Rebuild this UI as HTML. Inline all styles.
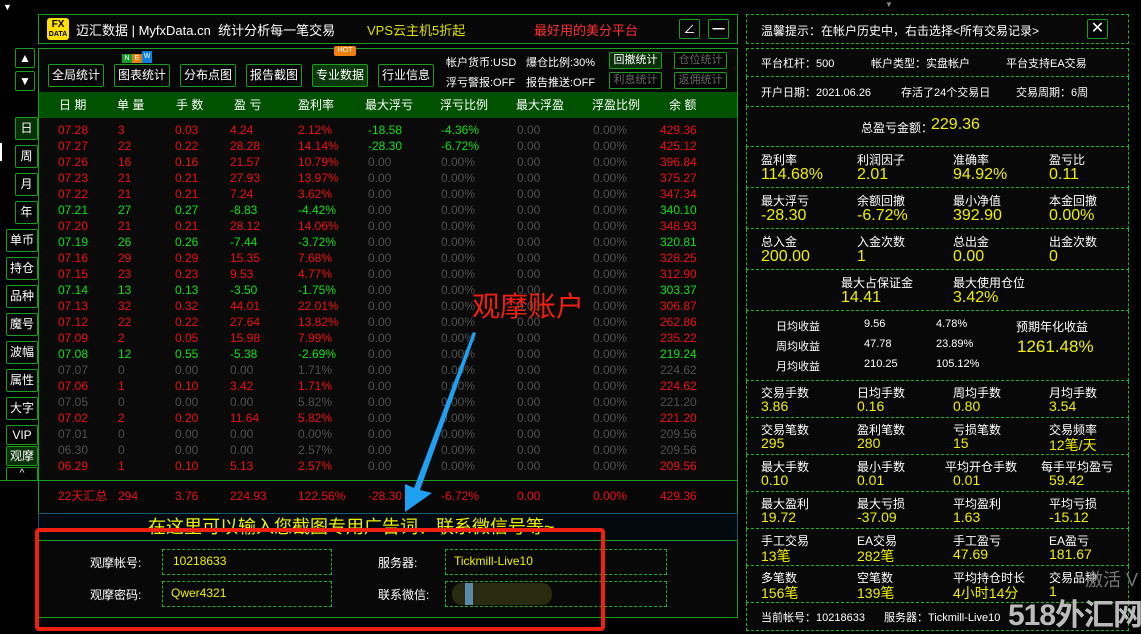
<!DOCTYPE html><html><head><meta charset="utf-8"><style>
*{margin:0;padding:0;box-sizing:border-box}
body{width:1141px;height:633px;background:#000;position:relative;overflow:hidden;font-family:"Liberation Sans","Noto Sans CJK SC",sans-serif;color:#fff;font-size:12px}
.a{position:absolute;white-space:nowrap}
.btn{position:absolute;border:1px solid #1c9e1c;background:#050505;color:#fff;text-align:center;font-size:12px;border-radius:2px}
.row{position:absolute;left:38px;width:700px;height:16px;font-size:12px;line-height:16px}
.row span{position:absolute}
.r{color:#f01010}.g{color:#10e010}.z{color:#505050}
.c1{left:20px}.c2{left:80px}.c3{left:137px}.c4{left:192px}.c5{left:260px}.c6{left:330px}.c7{left:403px}.c8{left:479px}.c9{left:555px}.c10{left:622px}
.sec{position:absolute;left:746px;width:383px;border-left:1px dashed #1cb41c;border-right:1px dashed #1cb41c;border-bottom:1px dashed #1cb41c;background:#080808}
.q{position:absolute;font-size:12px;color:#fff}
.v{position:absolute;font-size:16px;color:#f0f000}
</style></head><body>
<div class="a" style="left:3px;top:2px;color:#fff;font-size:9px">▼</div>
<!-- header -->
<div class="a" style="left:38px;top:14px;width:700px;height:30px;border:1px solid #1c9e1c;background:#070707"></div>
<div class="a" style="left:47px;top:18px;width:22px;height:22px;background:#ffe000;border-radius:3px;color:#000;font-weight:bold;font-size:10px;line-height:9px;text-align:center;padding-top:2px">FX<br><span style="font-size:7px">DATA</span></div>
<div class="a" style="left:76px;top:20px;font-size:13px">迈汇数据 | MyfxData.cn &nbsp;统计分析每一笔交易</div>
<div class="a" style="left:367px;top:20px;font-size:13px;color:#e0e000">VPS云主机5折起</div>
<div class="a" style="left:534px;top:20px;font-size:13px;color:#ff3030">最好用的美分平台</div>
<div class="btn" style="left:679px;top:19px;width:21px;height:20px;line-height:18px">∠</div>
<div class="btn" style="left:708px;top:19px;width:21px;height:20px;line-height:18px;font-weight:bold">━</div>
<!-- toolbar -->
<div class="a" style="left:38px;top:48px;width:700px;height:44px;border:1px solid #1c9e1c;border-bottom:none;background:#070707"></div>
<div class="btn" style="left:15px;top:48px;width:20px;height:20px;line-height:18px">▲</div>
<div class="btn" style="left:15px;top:71px;width:20px;height:20px;line-height:18px">▼</div>
<div class="btn" style="left:48px;top:64px;width:56px;height:23px;line-height:21px">全局统计</div>
<div class="btn" style="left:114px;top:64px;width:56px;height:23px;line-height:21px">图表统计</div>
<div class="a" style="left:122px;top:54px;width:10px;height:9px;background:#189a30;font-size:7px;text-align:center;line-height:9px">N</div>
<div class="a" style="left:132px;top:54px;width:10px;height:9px;background:#e08010;font-size:7px;text-align:center;line-height:9px">E</div>
<div class="a" style="left:142px;top:51px;width:10px;height:12px;background:#1080e0;font-size:7px;text-align:center;line-height:12px">W</div>
<div class="btn" style="left:180px;top:64px;width:56px;height:23px;line-height:21px">分布点图</div>
<div class="btn" style="left:246px;top:64px;width:56px;height:23px;line-height:21px">报告截图</div>
<div class="btn" style="left:312px;top:64px;width:56px;height:23px;line-height:21px;background:#0a3a0a">专业数据</div>
<div class="a" style="left:334px;top:46px;width:22px;height:10px;background:#f08010;font-size:7px;text-align:center;line-height:10px;border-radius:2px">HOT</div>
<div class="btn" style="left:378px;top:64px;width:56px;height:23px;line-height:21px">行业信息</div>
<div class="a" style="left:446px;top:54px;font-size:11px">帐户货币:USD</div>
<div class="a" style="left:526px;top:54px;font-size:11px">爆仓比例:30%</div>
<div class="a" style="left:446px;top:74px;font-size:11px">浮亏警报:OFF</div>
<div class="a" style="left:526px;top:74px;font-size:11px">报告推送:OFF</div>
<div class="btn" style="left:609px;top:52px;width:53px;height:17px;line-height:15px;font-size:11px;background:#0a300a">回撤统计</div>
<div class="btn" style="left:674px;top:52px;width:53px;height:17px;line-height:15px;font-size:11px;color:#666">仓位统计</div>
<div class="btn" style="left:609px;top:72px;width:53px;height:17px;line-height:15px;font-size:11px;color:#666">利息统计</div>
<div class="btn" style="left:674px;top:72px;width:53px;height:17px;line-height:15px;font-size:11px;color:#666">返佣统计</div>
<!-- column header -->
<div class="row" style="top:92px;height:26px;line-height:26px;background:#005200;border-left:1px solid #1c9e1c;border-right:1px solid #1c9e1c">
<span style="left:20px">日 期</span><span style="left:78px">单 量</span><span style="left:137px">手 数</span><span style="left:195px">盈 亏</span><span style="left:259px">盈利率</span><span style="left:326px">最大浮亏</span><span style="left:401px">浮亏比例</span><span style="left:477px">最大浮盈</span><span style="left:553px">浮盈比例</span><span style="left:630px">余 额</span></div>
<div class="a" style="left:38px;top:118px;width:700px;height:362px;background:#0a0a0a;border-left:1px solid #1c9e1c;border-right:1px solid #1c9e1c"></div>
<!-- side buttons -->
<div class="btn" style="left:15px;top:117px;width:23px;height:23px;line-height:21px;background:#0a300a">日</div>
<div class="btn" style="left:15px;top:145px;width:23px;height:23px;line-height:21px">周</div>
<div class="btn" style="left:15px;top:173px;width:23px;height:23px;line-height:21px">月</div>
<div class="btn" style="left:15px;top:201px;width:23px;height:23px;line-height:21px">年</div>
<div class="btn" style="left:6px;top:229px;width:32px;height:23px;line-height:21px">单币</div>
<div class="btn" style="left:6px;top:257px;width:32px;height:23px;line-height:21px">持仓</div>
<div class="btn" style="left:6px;top:285px;width:32px;height:23px;line-height:21px">品种</div>
<div class="btn" style="left:6px;top:313px;width:32px;height:23px;line-height:21px">魔号</div>
<div class="btn" style="left:6px;top:341px;width:32px;height:23px;line-height:21px">波幅</div>
<div class="btn" style="left:6px;top:369px;width:32px;height:23px;line-height:21px">属性</div>
<div class="btn" style="left:6px;top:397px;width:32px;height:23px;line-height:21px">大字</div>
<div class="btn" style="left:6px;top:425px;width:32px;height:20px;line-height:18px">VIP</div>
<div class="btn" style="left:6px;top:446px;width:32px;height:20px;line-height:18px;background:#0a300a">观摩</div>
<div class="btn" style="left:6px;top:467px;width:32px;height:14px;line-height:12px;font-size:10px">^</div>
<div class="a" style="left:0;top:143px;width:2px;height:18px;background:#fff"></div>
<!-- rows -->
<div class="row" style="top:122px"><span class="c1 r">07.28</span><span class="c2 r">3</span><span class="c3 r">0.03</span><span class="c4 r">4.24</span><span class="c5 r">2.12%</span><span class="c6 g">-18.58</span><span class="c7 g">-4.36%</span><span class="c8 z">0.00</span><span class="c9 z">0.00%</span><span class="c10 r">429.36</span></div>
<div class="row" style="top:138px"><span class="c1 r">07.27</span><span class="c2 r">22</span><span class="c3 r">0.22</span><span class="c4 r">28.28</span><span class="c5 r">14.14%</span><span class="c6 g">-28.30</span><span class="c7 g">-6.72%</span><span class="c8 z">0.00</span><span class="c9 z">0.00%</span><span class="c10 r">425.12</span></div>
<div class="row" style="top:154px"><span class="c1 r">07.26</span><span class="c2 r">16</span><span class="c3 r">0.16</span><span class="c4 r">21.57</span><span class="c5 r">10.79%</span><span class="c6 z">0.00</span><span class="c7 z">0.00%</span><span class="c8 z">0.00</span><span class="c9 z">0.00%</span><span class="c10 r">396.84</span></div>
<div class="row" style="top:170px"><span class="c1 r">07.23</span><span class="c2 r">21</span><span class="c3 r">0.21</span><span class="c4 r">27.93</span><span class="c5 r">13.97%</span><span class="c6 z">0.00</span><span class="c7 z">0.00%</span><span class="c8 z">0.00</span><span class="c9 z">0.00%</span><span class="c10 r">375.27</span></div>
<div class="row" style="top:186px"><span class="c1 r">07.22</span><span class="c2 r">21</span><span class="c3 r">0.21</span><span class="c4 r">7.24</span><span class="c5 r">3.62%</span><span class="c6 z">0.00</span><span class="c7 z">0.00%</span><span class="c8 z">0.00</span><span class="c9 z">0.00%</span><span class="c10 r">347.34</span></div>
<div class="row" style="top:202px"><span class="c1 g">07.21</span><span class="c2 g">27</span><span class="c3 g">0.27</span><span class="c4 g">-8.83</span><span class="c5 g">-4.42%</span><span class="c6 z">0.00</span><span class="c7 z">0.00%</span><span class="c8 z">0.00</span><span class="c9 z">0.00%</span><span class="c10 g">340.10</span></div>
<div class="row" style="top:218px"><span class="c1 r">07.20</span><span class="c2 r">21</span><span class="c3 r">0.21</span><span class="c4 r">28.12</span><span class="c5 r">14.06%</span><span class="c6 z">0.00</span><span class="c7 z">0.00%</span><span class="c8 z">0.00</span><span class="c9 z">0.00%</span><span class="c10 r">348.93</span></div>
<div class="row" style="top:234px"><span class="c1 g">07.19</span><span class="c2 g">26</span><span class="c3 g">0.26</span><span class="c4 g">-7.44</span><span class="c5 g">-3.72%</span><span class="c6 z">0.00</span><span class="c7 z">0.00%</span><span class="c8 z">0.00</span><span class="c9 z">0.00%</span><span class="c10 g">320.81</span></div>
<div class="row" style="top:250px"><span class="c1 r">07.16</span><span class="c2 r">29</span><span class="c3 r">0.29</span><span class="c4 r">15.35</span><span class="c5 r">7.68%</span><span class="c6 z">0.00</span><span class="c7 z">0.00%</span><span class="c8 z">0.00</span><span class="c9 z">0.00%</span><span class="c10 r">328.25</span></div>
<div class="row" style="top:266px"><span class="c1 r">07.15</span><span class="c2 r">23</span><span class="c3 r">0.23</span><span class="c4 r">9.53</span><span class="c5 r">4.77%</span><span class="c6 z">0.00</span><span class="c7 z">0.00%</span><span class="c8 z">0.00</span><span class="c9 z">0.00%</span><span class="c10 r">312.90</span></div>
<div class="row" style="top:282px"><span class="c1 g">07.14</span><span class="c2 g">13</span><span class="c3 g">0.13</span><span class="c4 g">-3.50</span><span class="c5 g">-1.75%</span><span class="c6 z">0.00</span><span class="c7 z">0.00%</span><span class="c8 z">0.00</span><span class="c9 z">0.00%</span><span class="c10 g">303.37</span></div>
<div class="row" style="top:298px"><span class="c1 r">07.13</span><span class="c2 r">32</span><span class="c3 r">0.32</span><span class="c4 r">44.01</span><span class="c5 r">22.01%</span><span class="c6 z">0.00</span><span class="c7 z">0.00%</span><span class="c8 z">0.00</span><span class="c9 z">0.00%</span><span class="c10 r">306.87</span></div>
<div class="row" style="top:314px"><span class="c1 r">07.12</span><span class="c2 r">22</span><span class="c3 r">0.22</span><span class="c4 r">27.64</span><span class="c5 r">13.82%</span><span class="c6 z">0.00</span><span class="c7 z">0.00%</span><span class="c8 z">0.00</span><span class="c9 z">0.00%</span><span class="c10 r">262.86</span></div>
<div class="row" style="top:330px"><span class="c1 r">07.09</span><span class="c2 r">2</span><span class="c3 r">0.05</span><span class="c4 r">15.98</span><span class="c5 r">7.99%</span><span class="c6 z">0.00</span><span class="c7 z">0.00%</span><span class="c8 z">0.00</span><span class="c9 z">0.00%</span><span class="c10 r">235.22</span></div>
<div class="row" style="top:346px"><span class="c1 g">07.08</span><span class="c2 g">12</span><span class="c3 g">0.55</span><span class="c4 g">-5.38</span><span class="c5 g">-2.69%</span><span class="c6 z">0.00</span><span class="c7 z">0.00%</span><span class="c8 z">0.00</span><span class="c9 z">0.00%</span><span class="c10 g">219.24</span></div>
<div class="row" style="top:362px"><span class="c1 z">07.07</span><span class="c2 z">0</span><span class="c3 z">0.00</span><span class="c4 z">0.00</span><span class="c5 z">1.71%</span><span class="c6 z">0.00</span><span class="c7 z">0.00%</span><span class="c8 z">0.00</span><span class="c9 z">0.00%</span><span class="c10 z">224.62</span></div>
<div class="row" style="top:378px"><span class="c1 r">07.06</span><span class="c2 r">1</span><span class="c3 r">0.10</span><span class="c4 r">3.42</span><span class="c5 r">1.71%</span><span class="c6 z">0.00</span><span class="c7 z">0.00%</span><span class="c8 z">0.00</span><span class="c9 z">0.00%</span><span class="c10 r">224.62</span></div>
<div class="row" style="top:394px"><span class="c1 z">07.05</span><span class="c2 z">0</span><span class="c3 z">0.00</span><span class="c4 z">0.00</span><span class="c5 z">5.82%</span><span class="c6 z">0.00</span><span class="c7 z">0.00%</span><span class="c8 z">0.00</span><span class="c9 z">0.00%</span><span class="c10 z">221.20</span></div>
<div class="row" style="top:410px"><span class="c1 r">07.02</span><span class="c2 r">2</span><span class="c3 r">0.20</span><span class="c4 r">11.64</span><span class="c5 r">5.82%</span><span class="c6 z">0.00</span><span class="c7 z">0.00%</span><span class="c8 z">0.00</span><span class="c9 z">0.00%</span><span class="c10 r">221.20</span></div>
<div class="row" style="top:426px"><span class="c1 z">07.01</span><span class="c2 z">0</span><span class="c3 z">0.00</span><span class="c4 z">0.00</span><span class="c5 z">0.00%</span><span class="c6 z">0.00</span><span class="c7 z">0.00%</span><span class="c8 z">0.00</span><span class="c9 z">0.00%</span><span class="c10 z">209.56</span></div>
<div class="row" style="top:442px"><span class="c1 z">06.30</span><span class="c2 z">0</span><span class="c3 z">0.00</span><span class="c4 z">0.00</span><span class="c5 z">2.57%</span><span class="c6 z">0.00</span><span class="c7 z">0.00%</span><span class="c8 z">0.00</span><span class="c9 z">0.00%</span><span class="c10 z">209.56</span></div>
<div class="row" style="top:458px"><span class="c1 r">06.29</span><span class="c2 r">1</span><span class="c3 r">0.10</span><span class="c4 r">5.13</span><span class="c5 r">2.57%</span><span class="c6 z">0.00</span><span class="c7 z">0.00%</span><span class="c8 z">0.00</span><span class="c9 z">0.00%</span><span class="c10 r">209.56</span></div>
<!-- summary -->
<div class="a" style="left:0;top:480px;width:738px;height:1px;background:#1c9e1c"></div>
<div class="a" style="left:38px;top:481px;width:700px;height:32px;background:#070707;border-left:1px solid #1c9e1c;border-right:1px solid #1c9e1c"></div>
<div class="row" style="top:488px"><span class="c1 r">22天汇总</span><span class="r" style="left:80px">294</span><span class="c3 r">3.76</span><span class="c4 r">224.93</span><span class="c5 r">122.56%</span><span class="c6 r">-28.30</span><span class="c7 r">-6.72%</span><span class="c8 r">0.00</span><span class="c9 r">0.00%</span><span class="c10 r">429.36</span></div>
<div class="a" style="left:38px;top:513px;width:700px;height:28px;background:#020a10;border:1px solid #1a5a70;border-bottom:1px solid #1c9e1c"></div>
<div class="a" style="left:148px;top:513px;font-size:18px;color:#f0f000">在这里可以输入您截图专用广告词、联系微信号等~</div>
<div class="a" style="left:38px;top:541px;width:700px;height:77px;background:#080808;border-left:1px solid #1c9e1c;border-right:1px solid #1c9e1c;border-bottom:1px solid #1c9e1c"></div>
<div class="a" style="left:90px;top:554px;font-size:12px">观摩帐号:</div>
<div class="a" style="left:162px;top:549px;width:170px;height:26px;border:1px dashed #1cb41c;color:#f0f000;padding:4px 0 0 10px">10218633</div>
<div class="a" style="left:90px;top:586px;font-size:12px">观摩密码:</div>
<div class="a" style="left:162px;top:581px;width:170px;height:26px;border:1px dashed #1cb41c;color:#f0f000;padding:4px 0 0 8px">Qwer4321</div>
<div class="a" style="left:378px;top:554px">服务器:</div>
<div class="a" style="left:445px;top:549px;width:222px;height:26px;border:1px dashed #1cb41c;color:#f0f000;padding:4px 0 0 8px">Tickmill-Live10</div>
<div class="a" style="left:378px;top:586px">联系微信:</div>
<div class="a" style="left:445px;top:581px;width:222px;height:26px;border:1px dashed #1cb41c"></div>
<div class="a" style="left:452px;top:583px;width:100px;height:22px;background:#2a2a10;border-radius:10px"></div>
<div class="a" style="left:465px;top:583px;width:8px;height:22px;background:#5a8aaa"></div>
<!-- red box -->
<div class="a" style="left:35px;top:528px;width:570px;height:103px;border:4px solid #f02010;border-radius:4px"></div>
<div class="a" style="left:472px;top:285px;font-size:28px;color:#f02010">观摩账户</div>
<svg class="a" style="left:0;top:0" width="740" height="633"><polygon points="473,332 476,333 420,490 432,493 405,512 405,484 414,488" fill="#20a0f0"/></svg>
<!-- right panel -->
<div class="a" style="left:885px;top:0;color:#888;font-size:8px">▼</div>
<div class="sec" style="top:14px;height:30px;border-top:1px dashed #1cb41c"></div>
<div class="q" style="left:761px;top:22px">温馨提示：在帐户历史中，右击选择&lt;所有交易记录&gt;</div>
<div class="btn" style="left:1087px;top:19px;width:21px;height:20px;line-height:17px;font-size:16px">✕</div>
<div class="sec" style="top:48px;height:29px;border-top:1px dashed #1cb41c"></div>
<div class="q" style="left:761px;top:55px;font-size:11px">平台杠杆：500</div><div class="q" style="left:871px;top:55px;font-size:11px">帐户类型：实盘帐户</div><div class="q" style="left:1006px;top:55px;font-size:11px">平台支持EA交易</div>
<div class="sec" style="top:77px;height:30px"></div>
<div class="q" style="left:761px;top:84px;font-size:11px">开户日期：2021.06.26</div><div class="q" style="left:901px;top:84px;font-size:11px">存活了24个交易日</div><div class="q" style="left:1016px;top:84px;font-size:11px">交易周期：6周</div>
<div class="sec" style="top:107px;height:40px"></div>
<div class="q" style="left:861px;top:119px">总盈亏金额：</div><div class="v" style="left:931px;top:116px">229.36</div>
<div class="sec" style="top:147px;height:41px"></div>
<div class="q" style="left:761px;top:151px">盈利率</div><div class="v" style="left:761px;top:166px">114.68%</div>
<div class="q" style="left:857px;top:151px">利润因子</div><div class="v" style="left:857px;top:166px">2.01</div>
<div class="q" style="left:953px;top:151px">准确率</div><div class="v" style="left:953px;top:166px">94.92%</div>
<div class="q" style="left:1049px;top:151px">盈亏比</div><div class="v" style="left:1049px;top:166px">0.11</div>
<div class="sec" style="top:188px;height:41px"></div>
<div class="q" style="left:761px;top:192px">最大浮亏</div><div class="v" style="left:761px;top:207px">-28.30</div>
<div class="q" style="left:857px;top:192px">余额回撤</div><div class="v" style="left:857px;top:207px">-6.72%</div>
<div class="q" style="left:953px;top:192px">最小净值</div><div class="v" style="left:953px;top:207px">392.90</div>
<div class="q" style="left:1049px;top:192px">本金回撤</div><div class="v" style="left:1049px;top:207px">0.00%</div>
<div class="sec" style="top:229px;height:41px"></div>
<div class="q" style="left:761px;top:233px">总入金</div><div class="v" style="left:761px;top:248px">200.00</div>
<div class="q" style="left:857px;top:233px">入金次数</div><div class="v" style="left:857px;top:248px">1</div>
<div class="q" style="left:953px;top:233px">总出金</div><div class="v" style="left:953px;top:248px">0.00</div>
<div class="q" style="left:1049px;top:233px">出金次数</div><div class="v" style="left:1049px;top:248px">0</div>
<div class="sec" style="top:270px;height:41px"></div>
<div class="q" style="left:841px;top:274px">最大占保证金</div><div class="v" style="left:841px;top:289px">14.41</div>
<div class="q" style="left:953px;top:274px">最大使用仓位</div><div class="v" style="left:953px;top:289px">3.42%</div>
<div class="sec" style="top:311px;height:70px"></div>
<div class="q" style="left:776px;top:318px;font-size:11px">日均收益</div><div class="q" style="left:864px;top:318px;font-size:11px">9.56</div><div class="q" style="left:936px;top:318px;font-size:11px">4.78%</div><div class="q" style="left:1016px;top:318px">预期年化收益</div>
<div class="q" style="left:776px;top:338px;font-size:11px">周均收益</div><div class="q" style="left:864px;top:338px;font-size:11px">47.78</div><div class="q" style="left:936px;top:338px;font-size:11px">23.89%</div><div class="v" style="left:1017px;top:337px;font-size:17px">1261.48%</div>
<div class="q" style="left:776px;top:358px;font-size:11px">月均收益</div><div class="q" style="left:864px;top:358px;font-size:11px">210.25</div><div class="q" style="left:936px;top:358px;font-size:11px">105.12%</div>
<div class="sec" style="top:381px;height:37px"></div>
<div class="q" style="left:761px;top:384px">交易手数</div><div class="v" style="left:761px;top:398px;font-size:14px">3.86</div>
<div class="q" style="left:857px;top:384px">日均手数</div><div class="v" style="left:857px;top:398px;font-size:14px">0.16</div>
<div class="q" style="left:953px;top:384px">周均手数</div><div class="v" style="left:953px;top:398px;font-size:14px">0.80</div>
<div class="q" style="left:1049px;top:384px">月均手数</div><div class="v" style="left:1049px;top:398px;font-size:14px">3.54</div>
<div class="sec" style="top:418px;height:37px"></div>
<div class="q" style="left:761px;top:421px">交易笔数</div><div class="v" style="left:761px;top:435px;font-size:14px">295</div>
<div class="q" style="left:857px;top:421px">盈利笔数</div><div class="v" style="left:857px;top:435px;font-size:14px">280</div>
<div class="q" style="left:953px;top:421px">亏损笔数</div><div class="v" style="left:953px;top:435px;font-size:14px">15</div>
<div class="q" style="left:1049px;top:421px">交易频率</div><div class="v" style="left:1049px;top:435px;font-size:14px">12笔/天</div>
<div class="sec" style="top:455px;height:37px"></div>
<div class="q" style="left:761px;top:458px">最大手数</div><div class="v" style="left:761px;top:472px;font-size:14px">0.10</div>
<div class="q" style="left:857px;top:458px">最小手数</div><div class="v" style="left:857px;top:472px;font-size:14px">0.01</div>
<div class="q" style="left:945px;top:458px">平均开仓手数</div><div class="v" style="left:953px;top:472px;font-size:14px">0.01</div>
<div class="q" style="left:1041px;top:458px">每手平均盈亏</div><div class="v" style="left:1049px;top:472px;font-size:14px">59.42</div>
<div class="sec" style="top:492px;height:37px"></div>
<div class="q" style="left:761px;top:495px">最大盈利</div><div class="v" style="left:761px;top:509px;font-size:14px">19.72</div>
<div class="q" style="left:857px;top:495px">最大亏损</div><div class="v" style="left:857px;top:509px;font-size:14px">-37.09</div>
<div class="q" style="left:953px;top:495px">平均盈利</div><div class="v" style="left:953px;top:509px;font-size:14px">1.63</div>
<div class="q" style="left:1049px;top:495px">平均亏损</div><div class="v" style="left:1049px;top:509px;font-size:14px">-15.12</div>
<div class="sec" style="top:529px;height:37px"></div>
<div class="q" style="left:761px;top:532px">手工交易</div><div class="v" style="left:761px;top:546px;font-size:14px">13笔</div>
<div class="q" style="left:857px;top:532px">EA交易</div><div class="v" style="left:857px;top:546px;font-size:14px">282笔</div>
<div class="q" style="left:953px;top:532px">手工盈亏</div><div class="v" style="left:953px;top:546px;font-size:14px">47.69</div>
<div class="q" style="left:1049px;top:532px">EA盈亏</div><div class="v" style="left:1049px;top:546px;font-size:14px">181.67</div>
<div class="sec" style="top:566px;height:37px"></div>
<div class="q" style="left:761px;top:569px">多笔数</div><div class="v" style="left:761px;top:583px;font-size:14px">156笔</div>
<div class="q" style="left:857px;top:569px">空笔数</div><div class="v" style="left:857px;top:583px;font-size:14px">139笔</div>
<div class="q" style="left:953px;top:569px">平均持仓时长</div><div class="v" style="left:953px;top:583px;font-size:14px">4小时14分</div>
<div class="q" style="left:1049px;top:569px">交易品种</div><div class="v" style="left:1049px;top:583px;font-size:14px">1</div>
<div class="sec" style="top:603px;height:28px"></div>
<div class="q" style="left:761px;top:609px;font-size:11px">当前帐号：10218633</div><div class="q" style="left:884px;top:609px;font-size:11px">服务器：Tickmill-Live10</div>
<div class="a" style="left:1085px;top:566px;font-size:18px;color:#777">激活 V</div>
<div class="a" style="left:1008px;top:590px;font-size:30px;font-weight:bold;color:#bbb;letter-spacing:-1px">518外汇网</div>
</body></html>
